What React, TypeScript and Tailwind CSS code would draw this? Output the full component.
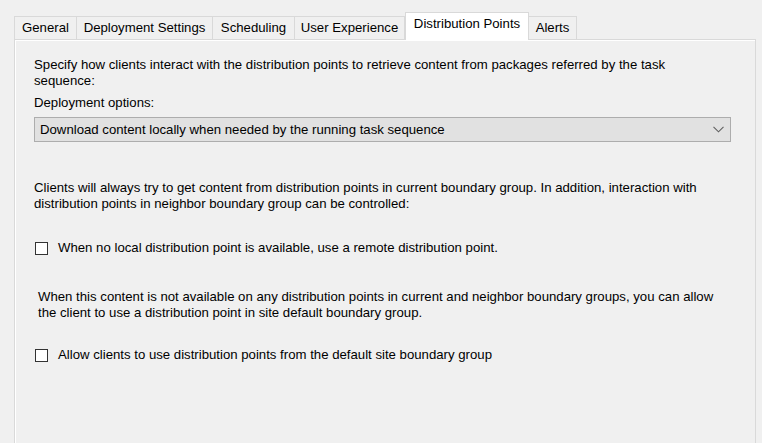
import React from "react";

const tabs = [
  { label: "General", w: "w-[63px]" },
  { label: "Deployment Settings", w: "w-[136px]" },
  { label: "Scheduling", w: "w-[82px]" },
  { label: "User Experience", w: "w-[110px]" },
  { label: "Distribution Points", w: "w-[124px]", active: true },
  { label: "Alerts", w: "w-[48px]" },
];

function Checkbox({ label }: { label: string }) {
  return (
    <div className="flex items-center h-[16px]">
      <div className="w-[13px] h-[13px] border border-[#333333] bg-white ml-[1px]" />
      <span className="ml-[10px]">{label}</span>
    </div>
  );
}

export default function App() {
  return (
    <div
      className="w-[762px] h-[443px] bg-[#f0f0f0] overflow-hidden text-[13.2px] leading-[16px] text-black"
      style={{ fontFamily: '"Liberation Sans", Arial, sans-serif' }}
    >
      <div className="pt-[12px] pl-[14px] w-[756px]">
        <div className="flex items-end h-[27px] relative z-10">
          {tabs.map((t) =>
            t.active ? (
              <div
                key={t.label}
                className={`${t.w} h-[28px] -mb-[1px] bg-white border border-b-0 border-[#d9d9d9] flex justify-center pt-[3px]`}
              >
                {t.label}
              </div>
            ) : (
              <div
                key={t.label}
                className={`${t.w} h-[23px] border border-l-0 first:border-l border-b-0 border-[#d9d9d9] flex items-center justify-center`}
              >
                {t.label}
              </div>
            )
          )}
        </div>
        <div className="border border-[#d9d9d9] shadow-[inset_1px_1px_0_#ffffff] h-[420px] pl-[19px] pr-[24px] pt-[17px]">
          <p>
            Specify how clients interact with the distribution points to retrieve content from packages referred by the task
            <br />
            sequence:
          </p>
          <p className="mt-[6px]">Deployment options:</p>
          <div className="mt-[6px] h-[25px] border border-[#adadad] bg-[#e1e1e1] flex items-center justify-between pl-[5px] pr-[6px]">
            <span>Download content locally when needed by the running task sequence</span>
            <svg width="11" height="7" viewBox="0 0 11 7" fill="none">
              <path d="M0.5 0.8 L5.5 5.8 L10.5 0.8" stroke="#606060" strokeWidth="1.1" />
            </svg>
          </div>
          <p className="mt-[38px]">
            Clients will always try to get content from distribution points in current boundary group. In addition, interaction with
            <br />
            distribution points in neighbor boundary group can be controlled:
          </p>
          <div className="mt-[28px]">
            <Checkbox label="When no local distribution point is available, use a remote distribution point." />
          </div>
          <p className="mt-[33px] pl-[4px]">
            When this content is not available on any distribution points in current and neighbor boundary groups, you can allow
            <br />
            the client to use a distribution point in site default boundary group.
          </p>
          <div className="mt-[26px]">
            <Checkbox label="Allow clients to use distribution points from the default site boundary group" />
          </div>
        </div>
      </div>
    </div>
  );
}
